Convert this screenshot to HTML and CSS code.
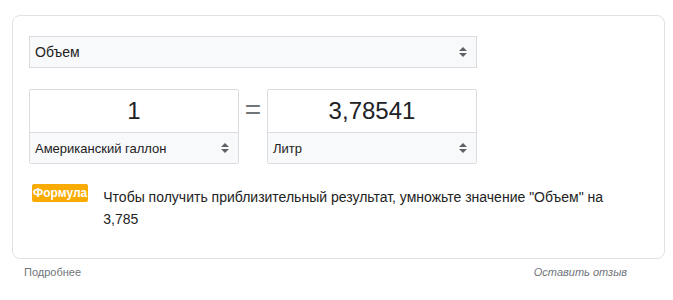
FILE: index.html
```html
<!DOCTYPE html>
<html lang="ru">
<head>
<meta charset="utf-8">
<link rel="stylesheet" href="styles.css">
</head>
<body>
<div class="card">
  <div class="content">
    <div class="select top-select">
      <span>Объем</span>
      <span class="arrows"><i class="up"></i><i class="down"></i></span>
    </div>
    <div class="converter">
      <div class="box">
        <div class="value">1</div>
        <div class="select unit">
          <span>Американский галлон</span>
          <span class="arrows"><i class="up"></i><i class="down"></i></span>
        </div>
      </div>
      <div class="equals">=</div>
      <div class="box">
        <div class="value">3,78541</div>
        <div class="select unit">
          <span>Литр</span>
          <span class="arrows"><i class="up"></i><i class="down"></i></span>
        </div>
      </div>
    </div>
  </div>
  <div class="formula">
    <span class="badge">Формула</span>
    <p class="formula-text">Чтобы получить приблизительный результат, умножьте значение "Объем" на 3,785</p>
  </div>
</div>
<div class="footer">
  <span>Подробнее</span>
  <span class="feedback">Оставить отзыв</span>
</div>
</body>
</html>
```

FILE: styles.css
```css
body {
  margin: 0;
  background: #fff;
  font-family: "Liberation Sans", Arial, sans-serif;
  color: #222;
}
.card {
  margin: 15px 0 0 12px;
  width: 651px;
  height: 242px;
  border: 1px solid #dfe1e5;
  border-radius: 8px;
  box-sizing: content-box;
  padding: 0;
}
.content {
  width: 448px;
  padding: 20px 0 0 16px;
}
.select {
  display: flex;
  align-items: center;
  justify-content: space-between;
  background: #f8f9fa;
  box-sizing: border-box;
}
.top-select {
  height: 32px;
  border: 1px solid #dadce0;
  padding: 0 9px 0 5px;
  font-size: 14px;
  color: #222;
}
.arrows {
  display: flex;
  flex-direction: column;
  align-items: center;
  gap: 2px;
}
.arrows i {
  display: block;
  width: 0;
  height: 0;
  border-left: 4px solid transparent;
  border-right: 4px solid transparent;
}
.arrows .up { border-bottom: 4px solid #5f6368; }
.arrows .down { border-top: 4px solid #5f6368; }
.converter {
  display: flex;
  align-items: flex-start;
  margin-top: 21px;
}
.box {
  width: 210px;
  height: 75px;
  border: 1px solid #dadce0;
  border-radius: 2px;
  box-sizing: border-box;
  display: flex;
  flex-direction: column;
}
.value {
  height: 42px;
  border-bottom: 1px solid #dadce0;
  text-align: center;
  font-size: 24px;
  line-height: 42px;
  color: #202124;
}
.unit {
  flex: 1;
  padding: 0 9px 0 5px;
  font-size: 13px;
  color: #222;
}
.equals {
  width: 28px;
  text-align: center;
  font-size: 28px;
  color: #70757a;
  line-height: 40px;
  padding-top: 1px;
}
.formula {
  display: flex;
  align-items: flex-start;
  padding: 20px 0 0 19px;
}
.badge {
  flex: none;
  background: #f9ab00;
  color: #fff;
  font-weight: bold;
  font-size: 12px;
  line-height: 18px;
  height: 18px;
  padding: 0 1px;
  border-radius: 2px;
}
.formula-text {
  margin: 2px 0 0 15px;
  width: 525px;
  font-size: 14px;
  line-height: 22px;
  color: #222;
}
.footer {
  display: flex;
  justify-content: space-between;
  width: 603px;
  margin: 7px 0 0 24px;
  font-size: 11px;
  color: #70757a;
}
.feedback {
  font-style: italic;
}
```
